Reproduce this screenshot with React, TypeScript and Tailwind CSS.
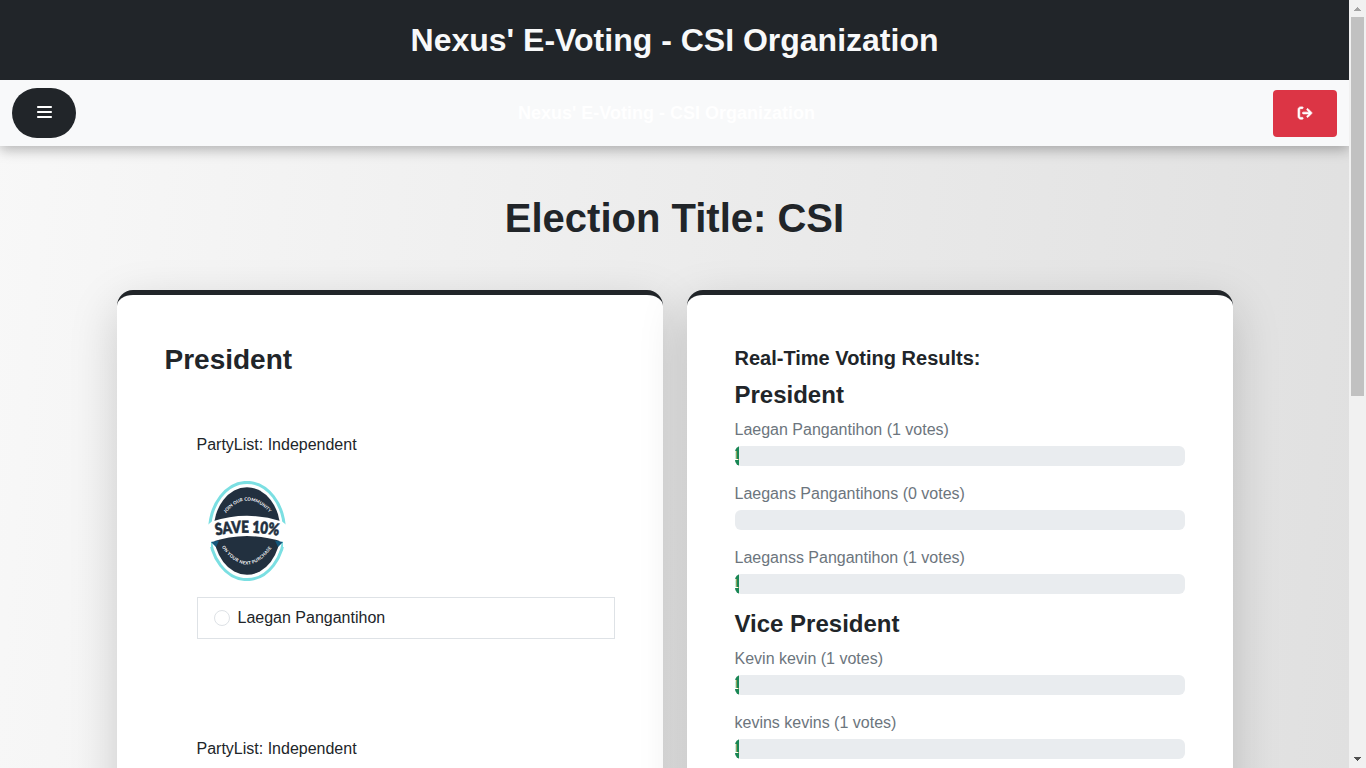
import { FaBars, FaArrowRightFromBracket } from "react-icons/fa6";

function Badge() {
  return (
    <svg width="100" height="100" viewBox="0 0 100 100" className="block">
      <ellipse cx="50" cy="50" rx="37.4" ry="48.6" fill="none" stroke="#7bdfe2" strokeWidth="3" />
      <ellipse cx="50" cy="50" rx="33.5" ry="43.8" fill="#22303f" />
      <path d="M8 46 L15 40.5 Q50 29 85 40.5 L92 46 V66 H86 V61 Q50 49 14 61 V66 H8Z" fill="#fff" />
      <path d="M14 61 L22 59.5 L19 66Z M86 61 L78 59.5 L81 66Z" fill="#14577c" />
      <path id="upperArc" d="M28 33 Q50 6 74 33" fill="none" />
      <path id="lowerArc" d="M24 65 Q50 102 76 65" fill="none" />
      <path id="middleArc" d="M19 54.5 Q50 48.5 86 55.5" fill="none" />
      <text fill="#fff" fontSize="4.4" fontWeight="700" fontFamily="Lato, sans-serif">
        <textPath href="#upperArc" startOffset="1" textLength="52">JOIN OUR COMMUNITY</textPath>
      </text>
      <text fill="#fff" fontSize="4.4" fontWeight="700" fontFamily="Lato, sans-serif">
        <textPath href="#lowerArc" startOffset="1" textLength="63">ON YOUR NEXT PURCHASE</textPath>
      </text>
      <text fill="#22303f" stroke="#22303f" strokeWidth="0.5" fontSize="16.5" fontWeight="800" fontFamily="Lato, sans-serif">
        <textPath href="#middleArc" textLength="63" lengthAdjust="spacingAndGlyphs">SAVE 10%</textPath>
      </text>
    </svg>
  );
}

function Candidate({ name }: { name: string }) {
  return (
    <div className="h-[304px] pl-8">
      <p className="mb-6 text-base">PartyList: Independent</p>
      <Badge />
      <label className="mt-4 flex h-[42px] items-center border border-[#dee2e6] px-4">
        <span className="mr-2 h-4 w-4 rounded-full border border-[#dee2e6]" />
        {name}
      </label>
    </div>
  );
}

function Result({ name, votes }: { name: string; votes: number }) {
  return (
    <div className="h-16">
      <p className="mb-1 text-base leading-6 text-[#6c757d]">
        {name} ({votes} votes)
      </p>
      <div className="flex h-5 overflow-hidden rounded-md bg-[#e9ecef] text-xs">
        {votes > 0 && (
          <div className="flex w-[1%] items-center justify-center overflow-hidden bg-[#198754] text-white">
            <span className="mr-[3px]">{votes}</span>
          </div>
        )}
      </div>
    </div>
  );
}

function Scrollbar() {
  return (
    <div className="flex w-[17px] flex-col items-center bg-[#f1f1f1]">
      <svg width="17" height="17" shapeRendering="crispEdges">
        <path d="M8 7h1v1h1v1h1v1h1v1H5v-1h1V9h1V8h1z" fill="#a3a3a3" />
      </svg>
      <div className="h-[379px] w-[13px] bg-[#c1c1c1]" />
      <svg width="17" height="17" shapeRendering="crispEdges" className="mt-auto">
        <path d="M5 6h7v1h-1v1h-1v1H9v1H8V9H7V8H6V7H5z" fill="#505050" />
      </svg>
    </div>
  );
}

const card =
  "h-[1200px] w-[546px] rounded-2xl border-t-[5px] border-[#212529] bg-white px-12 pt-12 shadow-[0_16px_48px_rgba(0,0,0,0.175)]";

export default function App() {
  return (
    <div className="flex h-screen overflow-hidden font-['Liberation_Sans',Arial,sans-serif] text-[#212529]">
      <div className="flex w-[1349px] flex-col overflow-hidden bg-linear-[95deg] from-[#f8f8f8] to-[#e0e0e0]">
        <header className="relative z-10 flex h-20 shrink-0 items-center justify-center bg-[#212529] text-[#f8f9fa]">
          <h1 className="text-[32px] leading-10 font-bold">Nexus' E-Voting - CSI Organization</h1>
        </header>
        <nav className="flex h-[66px] shrink-0 items-center justify-between bg-[#f8f9fa] px-3 shadow-[0_4px_12px_rgba(0,0,0,0.27)]">
          <button className="flex h-[50px] w-16 items-center justify-center rounded-[25px] bg-[#212529] pb-0.5 text-white">
            <FaBars preserveAspectRatio="none" className="h-4 w-[15px]" />
          </button>
          <span className="mr-4 text-lg font-bold text-white">Nexus' E-Voting - CSI Organization</span>
          <button className="mt-px flex h-[47px] w-16 items-center justify-center rounded bg-[#dc3545] pb-0.5 text-white">
            <FaArrowRightFromBracket size={14} className="overflow-visible" stroke="currentColor" strokeWidth={26} />
          </button>
        </nav>
        <main className="flex flex-1 flex-col items-center pt-12">
          <h2 className="mb-12 text-[40px] leading-12 font-bold">Election Title: CSI</h2>
          <div className="flex shrink-0 gap-6">
            <section className={card}>
              <h3 className="mb-14 text-[28px] leading-[34px] font-bold">President</h3>
              <Candidate name="Laegan Pangantihon" />
              <p className="pl-8 text-base">PartyList: Independent</p>
            </section>
            <section className={card}>
              <h4 className="mt-[3px] mb-[11px] text-xl leading-6 font-bold">Real-Time Voting Results:</h4>
              <h3 className="mb-2.5 text-2xl leading-[27px] font-bold">President</h3>
              <Result name="Laegan Pangantihon" votes={1} />
              <Result name="Laegans Pangantihons" votes={0} />
              <Result name="Laeganss Pangantihon" votes={1} />
              <h3 className="mb-2.5 text-2xl leading-[27px] font-bold">Vice President</h3>
              <Result name="Kevin kevin" votes={1} />
              <Result name="kevins kevins" votes={1} />
            </section>
          </div>
        </main>
      </div>
      <Scrollbar />
    </div>
  );
}
